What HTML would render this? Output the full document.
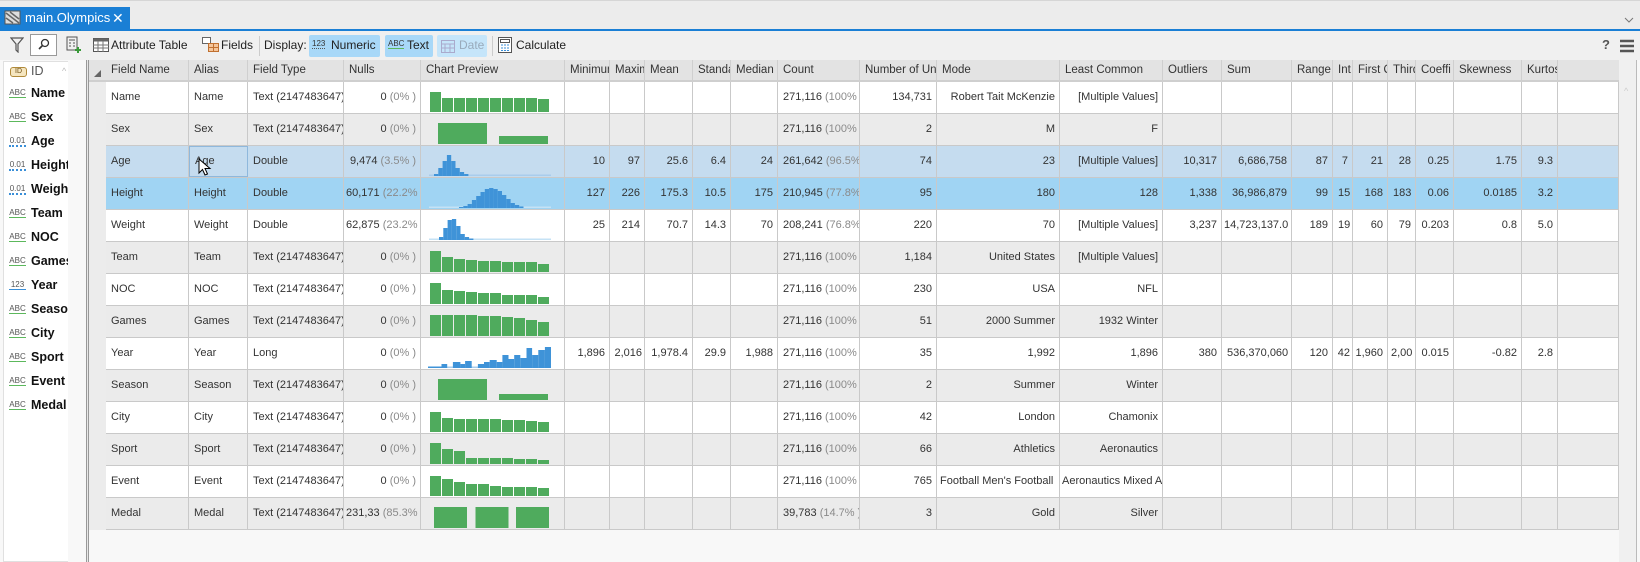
<!DOCTYPE html>
<html><head><meta charset="utf-8"><style>
*{box-sizing:border-box;margin:0;padding:0}
body{width:1640px;height:562px;overflow:hidden;background:#f8f8f8;font-family:"Liberation Sans",sans-serif;font-size:12px;color:#333;position:relative}
.abs{position:absolute}
#tabbar{left:0;top:0;width:1640px;height:29px;background:#ececec;border-top:1px solid #d6d6d6}
#tab{left:0;top:7px;width:130px;height:22px;background:#1a7fd5;color:#fff;font-size:13px;line-height:22px}
#blue{left:0;top:29px;width:1640px;height:2px;background:#1a7fd5}
#tb{left:0;top:31px;width:1640px;height:29px;background:#f0f0f0}
.tbt{position:absolute;top:37px;font-size:12px;line-height:16px;color:#222}
.btn{position:absolute;top:35px;height:22px;background:#a8d8f8;border-radius:2px}
#left{left:0;top:60px;width:86px;height:502px;background:#f1f1f1}
#list{left:3px;top:61px;width:65px;height:501px;background:#fff;border:1px solid #e0e0e0;border-right:none}
.fi{position:absolute;left:31px;font-weight:bold;font-size:12.5px;color:#111;white-space:nowrap;width:37px;overflow:hidden;line-height:16px}
.ic{position:absolute;left:9px;font-size:8px;color:#555;line-height:9px;width:17px;text-align:center}
.ic.t{border-bottom:1.5px solid #5cb85c}
.ic.d{border-bottom:2px dotted #3a8fd8}
.ic.l{border-bottom:1.5px solid #3a8fd8}
#hdr{left:89px;top:60px;width:1530px;height:22px;background:#e3e3e3;border-bottom:2px solid #cfcfcf}
.hc{position:absolute;top:0;height:20px;line-height:20px;padding-left:5px;white-space:nowrap;overflow:hidden;color:#333;border-right:1px solid #cfcfcf;font-size:11.5px}
.row{position:absolute;left:106px;width:1513px;height:32px;border-bottom:1px solid #c9c9c9}
.c{position:absolute;top:0;height:31px;line-height:31px;border-right:1px solid #c9c9c9;white-space:nowrap;overflow:hidden;padding:0 4px 0 5px;color:#333;font-size:11px}
.r{text-align:right}
.g{color:#8a8a8a}
svg{position:absolute;left:0;top:0}
</style></head><body>
<div id="tabbar" class="abs"></div>
<div id="tab" class="abs"><svg width="18" height="16" style="left:4px;top:3px"><rect x="1" y="1" width="15" height="13" fill="#ddd" stroke="#555"/><path d="M2 3L15 13M2 8L9 13M6 2L15 9" stroke="#666" stroke-width="1.5"/></svg><span style="position:absolute;left:25px">main.Olympics</span><span style="position:absolute;left:112px;font-size:14px">✕</span></div>
<div id="blue" class="abs"></div>
<div id="tb" class="abs"></div>
<svg width="14" height="16" style="left:10px;top:37px"><path d="M1 1H13L8 7V15L6 13V7Z" fill="none" stroke="#555" stroke-width="1.2"/></svg>
<div class="abs" style="left:30px;top:34px;width:27px;height:22px;background:#fff;border:1px solid #999"><svg width="25" height="20"><circle cx="14" cy="8" r="3.5" fill="none" stroke="#333" stroke-width="1.3"/><path d="M11.5 10.5L8 14" stroke="#333" stroke-width="1.6"/></svg></div>
<svg width="16" height="18" style="left:66px;top:36px"><rect x="1" y="1" width="10" height="13" fill="none" stroke="#555"/><path d="M3 4h6M3 7h2M7 7h2M3 10h2M7 10h2" stroke="#555"/><path d="M12 11v6M9 14h6" stroke="#3a9a3a" stroke-width="2"/></svg>
<div class="abs" style="left:86px;top:60px;width:3px;height:502px;border-left:1px solid #999;border-right:1px solid #999;background:#e8e8e8"></div>
<svg width="16" height="14" style="left:93px;top:38px"><rect x="0.5" y="0.5" width="15" height="13" fill="#fff" stroke="#555"/><rect x="0.5" y="0.5" width="15" height="3" fill="#666"/><path d="M0 7h16M0 10h16M5 3v11M10 3v11" stroke="#777"/></svg>
<div class="tbt" style="left:111px">Attribute Table</div>
<svg width="18" height="16" style="left:202px;top:37px"><rect x="0.5" y="0.5" width="8" height="6" fill="#fff" stroke="#666"/><rect x="6.5" y="6.5" width="10" height="8" fill="#f5c59a" stroke="#c07030"/><path d="M11.5 6.5v8M6.5 10.5h10" stroke="#c07030"/></svg>
<div class="tbt" style="left:221px">Fields</div>
<div class="abs" style="left:259px;top:36px;width:1px;height:20px;background:#ccc"></div>
<div class="tbt" style="left:264px">Display:</div>
<div class="btn" style="left:309px;width:71px"></div>
<div class="abs" style="left:312px;top:39px;font-size:8px;color:#333;border-bottom:1px dotted #555;line-height:9px">123</div>
<div class="tbt" style="left:331px">Numeric</div>
<div class="btn" style="left:385px;width:48px"></div>
<div class="abs" style="left:388px;top:39px;font-size:8px;color:#333;border-bottom:1.5px solid #5cb85c;line-height:9px">ABC</div>
<div class="tbt" style="left:407px">Text</div>
<div class="btn" style="left:437px;width:50px;background:#c5e5fa"></div>
<svg width="14" height="14" style="left:441px;top:39px"><rect x="0.5" y="1.5" width="13" height="12" fill="none" stroke="#aac"/><path d="M0 5h14M4 5v9M9 5v9M0 9h14" stroke="#aac"/></svg>
<div class="tbt" style="left:459px;color:#9ab">Date</div>
<div class="abs" style="left:492px;top:36px;width:1px;height:20px;background:#ccc"></div>
<svg width="14" height="16" style="left:498px;top:37px"><rect x="0.5" y="0.5" width="13" height="15" fill="#fff" stroke="#555"/><rect x="2.5" y="2.5" width="9" height="3" fill="none" stroke="#555"/><path d="M3 8h2M6 8h2M9 8h2M3 11h2M6 11h2M9 11h2M3 13.5h2M6 13.5h2M9 13.5h2" stroke="#3a8fd8"/></svg>
<div class="tbt" style="left:516px">Calculate</div>
<div class="tbt" style="left:1602px;font-weight:bold;color:#555;font-size:13px">?</div>
<svg width="14" height="14" style="left:1620px;top:39px"><path d="M0 2h14M0 7h14M0 12h14" stroke="#555" stroke-width="2.5"/></svg>
<svg width="10" height="6" style="left:1624px;top:17px"><path d="M1 1l4 4 4-4" fill="none" stroke="#777"/></svg>
<div id="list" class="abs"></div>
<div class="abs" style="left:62px;top:66px;color:#bbb;font-size:9px">^</div>
<div class="abs" style="left:10px;top:67px;width:17px;height:10px;border:1px solid #b08a3a;border-radius:3px;background:#f5e6c0;font-size:7px;line-height:8px;text-align:center;color:#6a4a10">ID</div>
<div class="abs" style="left:31px;top:64px;font-size:12.5px;color:#555">ID</div>
<div class="ic t" style="top:88px">ABC</div><div class="fi" style="top:85px">Name</div>
<div class="ic t" style="top:112px">ABC</div><div class="fi" style="top:109px">Sex</div>
<div class="ic d" style="top:136px">0.01</div><div class="fi" style="top:133px">Age</div>
<div class="ic d" style="top:160px">0.01</div><div class="fi" style="top:157px">Height</div>
<div class="ic d" style="top:184px">0.01</div><div class="fi" style="top:181px">Weight</div>
<div class="ic t" style="top:208px">ABC</div><div class="fi" style="top:205px">Team</div>
<div class="ic t" style="top:232px">ABC</div><div class="fi" style="top:229px">NOC</div>
<div class="ic t" style="top:256px">ABC</div><div class="fi" style="top:253px">Games</div>
<div class="ic l" style="top:280px">123</div><div class="fi" style="top:277px">Year</div>
<div class="ic t" style="top:304px">ABC</div><div class="fi" style="top:301px">Season</div>
<div class="ic t" style="top:328px">ABC</div><div class="fi" style="top:325px">City</div>
<div class="ic t" style="top:352px">ABC</div><div class="fi" style="top:349px">Sport</div>
<div class="ic t" style="top:376px">ABC</div><div class="fi" style="top:373px">Event</div>
<div class="ic t" style="top:400px">ABC</div><div class="fi" style="top:397px">Medal</div>
<div class="abs" style="left:89px;top:82px;width:17px;height:448px;background:#ececec"></div>
<div class="abs" style="left:1619px;top:60px;width:18px;height:502px;background:#f0f0f0;border-right:1px solid #bbb"></div>
<div class="abs" style="left:1624px;top:86px;color:#ccc;font-size:9px">^</div>
<div id="hdr" class="abs">
<svg width="8" height="8" style="left:5px;top:10px"><path d="M7 0V7H0Z" fill="#666"/></svg>
<div class="hc" style="left:17px;width:83px">Field Name</div>
<div class="hc" style="left:100px;width:59px">Alias</div>
<div class="hc" style="left:159px;width:96px">Field Type</div>
<div class="hc" style="left:255px;width:77px">Nulls</div>
<div class="hc" style="left:332px;width:144px">Chart Preview</div>
<div class="hc" style="left:476px;width:45px">Minimum</div>
<div class="hc" style="left:521px;width:35px">Maximum</div>
<div class="hc" style="left:556px;width:48px">Mean</div>
<div class="hc" style="left:604px;width:38px">Standard</div>
<div class="hc" style="left:642px;width:47px">Median</div>
<div class="hc" style="left:689px;width:82px">Count</div>
<div class="hc" style="left:771px;width:77px">Number of Unique</div>
<div class="hc" style="left:848px;width:123px">Mode</div>
<div class="hc" style="left:971px;width:103px">Least Common</div>
<div class="hc" style="left:1074px;width:59px">Outliers</div>
<div class="hc" style="left:1133px;width:70px">Sum</div>
<div class="hc" style="left:1203px;width:41px">Range</div>
<div class="hc" style="left:1244px;width:20px">Int</div>
<div class="hc" style="left:1264px;width:35px">First Q</div>
<div class="hc" style="left:1299px;width:28px">Third</div>
<div class="hc" style="left:1327px;width:38px">Coeffi</div>
<div class="hc" style="left:1365px;width:68px">Skewness</div>
<div class="hc" style="left:1433px;width:36px">Kurtosis</div>
</div>

<div class="row" style="top:82px;background:#fff">
<div class="c" style="left:0;width:83px">Name</div><div class="c" style="left:83px;width:59px">Name</div><div class="c" style="left:142px;width:96px">Text (2147483647)</div><div class="c r" style="left:238px;width:77px">0 <span class="g">(0% )</span></div>
<div class="c" style="left:315px;width:144px"><svg width="144" height="31" fill="#4fab5d"><rect x="9" y="10" width="11" height="20"/><rect x="21" y="16" width="11" height="14"/><rect x="33" y="16" width="11" height="14"/><rect x="45" y="16" width="11" height="14"/><rect x="57" y="16" width="11" height="14"/><rect x="69" y="16" width="11" height="14"/><rect x="81" y="16" width="11" height="14"/><rect x="93" y="16" width="11" height="14"/><rect x="105" y="16" width="11" height="14"/><rect x="117" y="17" width="11" height="13"/></svg></div>
<div class="c" style="left:459px;width:45px"></div><div class="c" style="left:504px;width:35px"></div><div class="c" style="left:539px;width:48px"></div><div class="c" style="left:587px;width:38px"></div><div class="c" style="left:625px;width:47px"></div>
<div class="c r" style="left:672px;width:82px">271,116 <span class="g">(100% )</span></div><div class="c r" style="left:754px;width:77px">134,731</div><div class="c r" style="left:831px;width:123px">Robert Tait McKenzie</div><div class="c r" style="left:954px;width:103px">[Multiple Values]</div>
<div class="c" style="left:1057px;width:59px"></div><div class="c" style="left:1116px;width:70px"></div><div class="c" style="left:1186px;width:41px"></div><div class="c" style="left:1227px;width:20px"></div><div class="c" style="left:1247px;width:35px"></div><div class="c" style="left:1282px;width:28px"></div><div class="c" style="left:1310px;width:38px"></div><div class="c" style="left:1348px;width:68px"></div><div class="c" style="left:1416px;width:36px"></div><div class="c" style="left:1452px;width:61px"></div>
</div>

<div class="row" style="top:114px;background:#ebebeb">
<div class="c" style="left:0;width:83px">Sex</div><div class="c" style="left:83px;width:59px">Sex</div><div class="c" style="left:142px;width:96px">Text (2147483647)</div><div class="c r" style="left:238px;width:77px">0 <span class="g">(0% )</span></div>
<div class="c" style="left:315px;width:144px"><svg width="144" height="31" fill="#4fab5d"><rect x="17" y="9" width="49" height="21"/><rect x="78" y="22" width="49" height="8"/></svg></div>
<div class="c" style="left:459px;width:45px"></div><div class="c" style="left:504px;width:35px"></div><div class="c" style="left:539px;width:48px"></div><div class="c" style="left:587px;width:38px"></div><div class="c" style="left:625px;width:47px"></div>
<div class="c r" style="left:672px;width:82px">271,116 <span class="g">(100% )</span></div><div class="c r" style="left:754px;width:77px">2</div><div class="c r" style="left:831px;width:123px">M</div><div class="c r" style="left:954px;width:103px">F</div>
<div class="c" style="left:1057px;width:59px"></div><div class="c" style="left:1116px;width:70px"></div><div class="c" style="left:1186px;width:41px"></div><div class="c" style="left:1227px;width:20px"></div><div class="c" style="left:1247px;width:35px"></div><div class="c" style="left:1282px;width:28px"></div><div class="c" style="left:1310px;width:38px"></div><div class="c" style="left:1348px;width:68px"></div><div class="c" style="left:1416px;width:36px"></div><div class="c" style="left:1452px;width:61px"></div>
</div>

<div class="row" style="top:146px;background:#c5dcef">
<div class="c" style="left:0;width:83px">Age</div><div class="c" style="left:83px;width:59px;border:1px solid #8fb8dc;line-height:29px">Age</div><div class="c" style="left:142px;width:96px">Double</div><div class="c r" style="left:238px;width:77px">9,474 <span class="g">(3.5% )</span></div>
<div class="c" style="left:315px;width:144px"><svg width="144" height="31"><rect x="8" y="28.5" width="122" height="1.5" fill="#a9cdec"/><g fill="#3f93d8"><rect x="13" y="28" width="4.3" height="2"/><rect x="17.3" y="22" width="4.3" height="8"/><rect x="21.6" y="15" width="4.3" height="15"/><rect x="25.9" y="9" width="4.3" height="21"/><rect x="30.2" y="15" width="4.3" height="15"/><rect x="34.5" y="22" width="4.3" height="8"/><rect x="38.8" y="26" width="4.3" height="4"/><rect x="43.1" y="28" width="4.3" height="2"/></g></svg></div>
<div class="c r" style="left:459px;width:45px">10</div><div class="c r" style="left:504px;width:35px">97</div><div class="c r" style="left:539px;width:48px">25.6</div><div class="c r" style="left:587px;width:38px">6.4</div><div class="c r" style="left:625px;width:47px">24</div>
<div class="c r" style="left:672px;width:82px">261,642 <span class="g">(96.5% )</span></div><div class="c r" style="left:754px;width:77px">74</div><div class="c r" style="left:831px;width:123px">23</div><div class="c r" style="left:954px;width:103px">[Multiple Values]</div>
<div class="c r" style="left:1057px;width:59px">10,317</div><div class="c r" style="left:1116px;width:70px">6,686,758</div><div class="c r" style="left:1186px;width:41px">87</div><div class="c r" style="left:1227px;width:20px">7</div><div class="c r" style="left:1247px;width:35px">21</div><div class="c r" style="left:1282px;width:28px">28</div><div class="c r" style="left:1310px;width:38px">0.25</div><div class="c r" style="left:1348px;width:68px">1.75</div><div class="c r" style="left:1416px;width:36px">9.3</div><div class="c" style="left:1452px;width:61px"></div>
</div>
<svg width="14" height="20" style="left:198px;top:158px"><path d="M1 1V15L4.5 11.5L7 17L9.5 16L7 10.5H12Z" fill="#fff" stroke="#000" stroke-width="1"/></svg>

<div class="row" style="top:178px;background:#a0d4f3">
<div class="c" style="left:0;width:83px">Height</div><div class="c" style="left:83px;width:59px">Height</div><div class="c" style="left:142px;width:96px">Double</div><div class="c r" style="left:238px;width:77px;padding-left:2px">60,171 <span class="g">(22.2% )</span></div>
<div class="c" style="left:315px;width:144px"><svg width="144" height="31"><rect x="8" y="28.5" width="122" height="1.5" fill="#c5e2f5"/><g fill="#3f93d8"><rect x="38" y="29" width="4.3" height="1"/><rect x="42.3" y="28" width="4.3" height="2"/><rect x="46.6" y="26" width="4.3" height="4"/><rect x="50.9" y="22" width="4.3" height="8"/><rect x="55.2" y="18" width="4.3" height="12"/><rect x="59.5" y="14" width="4.3" height="16"/><rect x="63.8" y="11" width="4.3" height="19"/><rect x="68.1" y="10" width="4.3" height="20"/><rect x="72.4" y="11" width="4.3" height="19"/><rect x="76.7" y="13" width="4.3" height="17"/><rect x="81" y="17" width="4.3" height="13"/><rect x="85.3" y="21" width="4.3" height="9"/><rect x="89.6" y="25" width="4.3" height="5"/><rect x="93.9" y="27" width="4.3" height="3"/><rect x="98.2" y="28.5" width="4.3" height="1.5"/></g></svg></div>
<div class="c r" style="left:459px;width:45px">127</div><div class="c r" style="left:504px;width:35px">226</div><div class="c r" style="left:539px;width:48px">175.3</div><div class="c r" style="left:587px;width:38px">10.5</div><div class="c r" style="left:625px;width:47px">175</div>
<div class="c r" style="left:672px;width:82px">210,945 <span class="g">(77.8% )</span></div><div class="c r" style="left:754px;width:77px">95</div><div class="c r" style="left:831px;width:123px">180</div><div class="c r" style="left:954px;width:103px">128</div>
<div class="c r" style="left:1057px;width:59px">1,338</div><div class="c r" style="left:1116px;width:70px">36,986,879</div><div class="c r" style="left:1186px;width:41px">99</div><div class="c r" style="left:1227px;width:20px">15</div><div class="c r" style="left:1247px;width:35px">168</div><div class="c r" style="left:1282px;width:28px">183</div><div class="c r" style="left:1310px;width:38px">0.06</div><div class="c r" style="left:1348px;width:68px">0.0185</div><div class="c r" style="left:1416px;width:36px">3.2</div><div class="c" style="left:1452px;width:61px"></div>
</div>

<div class="row" style="top:210px;background:#fff">
<div class="c" style="left:0;width:83px">Weight</div><div class="c" style="left:83px;width:59px">Weight</div><div class="c" style="left:142px;width:96px">Double</div><div class="c r" style="left:238px;width:77px;padding-left:2px">62,875 <span class="g">(23.2% )</span></div>
<div class="c" style="left:315px;width:144px"><svg width="144" height="31"><rect x="8" y="28.5" width="122" height="1.5" fill="#c5e2f5"/><g fill="#3f93d8"><rect x="18" y="27" width="4.3" height="3"/><rect x="22.3" y="18" width="4.3" height="12"/><rect x="26.6" y="10" width="4.3" height="20"/><rect x="30.9" y="9" width="4.3" height="21"/><rect x="35.2" y="16" width="4.3" height="14"/><rect x="39.5" y="24" width="4.3" height="6"/><rect x="43.8" y="27" width="4.3" height="3"/><rect x="48.1" y="28.5" width="4.3" height="1.5"/></g></svg></div>
<div class="c r" style="left:459px;width:45px">25</div><div class="c r" style="left:504px;width:35px">214</div><div class="c r" style="left:539px;width:48px">70.7</div><div class="c r" style="left:587px;width:38px">14.3</div><div class="c r" style="left:625px;width:47px">70</div>
<div class="c r" style="left:672px;width:82px">208,241 <span class="g">(76.8% )</span></div><div class="c r" style="left:754px;width:77px">220</div><div class="c r" style="left:831px;width:123px">70</div><div class="c r" style="left:954px;width:103px">[Multiple Values]</div>
<div class="c r" style="left:1057px;width:59px">3,237</div><div class="c r" style="left:1116px;width:70px;padding-left:2px">14,723,137.0</div><div class="c r" style="left:1186px;width:41px">189</div><div class="c r" style="left:1227px;width:20px">19</div><div class="c r" style="left:1247px;width:35px">60</div><div class="c r" style="left:1282px;width:28px">79</div><div class="c r" style="left:1310px;width:38px">0.203</div><div class="c r" style="left:1348px;width:68px">0.8</div><div class="c r" style="left:1416px;width:36px">5.0</div><div class="c" style="left:1452px;width:61px"></div>
</div>

<div class="row" style="top:242px;background:#ebebeb">
<div class="c" style="left:0;width:83px">Team</div><div class="c" style="left:83px;width:59px">Team</div><div class="c" style="left:142px;width:96px">Text (2147483647)</div><div class="c r" style="left:238px;width:77px">0 <span class="g">(0% )</span></div>
<div class="c" style="left:315px;width:144px"><svg width="144" height="31" fill="#4fab5d"><rect x="9" y="9" width="11" height="21"/><rect x="21" y="15" width="11" height="15"/><rect x="33" y="17" width="11" height="13"/><rect x="45" y="18" width="11" height="12"/><rect x="57" y="19" width="11" height="11"/><rect x="69" y="19" width="11" height="11"/><rect x="81" y="20" width="11" height="10"/><rect x="93" y="20" width="11" height="10"/><rect x="105" y="20" width="11" height="10"/><rect x="117" y="22" width="11" height="8"/></svg></div>
<div class="c" style="left:459px;width:45px"></div><div class="c" style="left:504px;width:35px"></div><div class="c" style="left:539px;width:48px"></div><div class="c" style="left:587px;width:38px"></div><div class="c" style="left:625px;width:47px"></div>
<div class="c r" style="left:672px;width:82px">271,116 <span class="g">(100% )</span></div><div class="c r" style="left:754px;width:77px">1,184</div><div class="c r" style="left:831px;width:123px">United States</div><div class="c r" style="left:954px;width:103px">[Multiple Values]</div>
<div class="c" style="left:1057px;width:59px"></div><div class="c" style="left:1116px;width:70px"></div><div class="c" style="left:1186px;width:41px"></div><div class="c" style="left:1227px;width:20px"></div><div class="c" style="left:1247px;width:35px"></div><div class="c" style="left:1282px;width:28px"></div><div class="c" style="left:1310px;width:38px"></div><div class="c" style="left:1348px;width:68px"></div><div class="c" style="left:1416px;width:36px"></div><div class="c" style="left:1452px;width:61px"></div>
</div>

<div class="row" style="top:274px;background:#fff">
<div class="c" style="left:0;width:83px">NOC</div><div class="c" style="left:83px;width:59px">NOC</div><div class="c" style="left:142px;width:96px">Text (2147483647)</div><div class="c r" style="left:238px;width:77px">0 <span class="g">(0% )</span></div>
<div class="c" style="left:315px;width:144px"><svg width="144" height="31" fill="#4fab5d"><rect x="9" y="9" width="11" height="21"/><rect x="21" y="16" width="11" height="14"/><rect x="33" y="17" width="11" height="13"/><rect x="45" y="18" width="11" height="12"/><rect x="57" y="19" width="11" height="11"/><rect x="69" y="19" width="11" height="11"/><rect x="81" y="21" width="11" height="9"/><rect x="93" y="21" width="11" height="9"/><rect x="105" y="21" width="11" height="9"/><rect x="117" y="23" width="11" height="7"/></svg></div>
<div class="c" style="left:459px;width:45px"></div><div class="c" style="left:504px;width:35px"></div><div class="c" style="left:539px;width:48px"></div><div class="c" style="left:587px;width:38px"></div><div class="c" style="left:625px;width:47px"></div>
<div class="c r" style="left:672px;width:82px">271,116 <span class="g">(100% )</span></div><div class="c r" style="left:754px;width:77px">230</div><div class="c r" style="left:831px;width:123px">USA</div><div class="c r" style="left:954px;width:103px">NFL</div>
<div class="c" style="left:1057px;width:59px"></div><div class="c" style="left:1116px;width:70px"></div><div class="c" style="left:1186px;width:41px"></div><div class="c" style="left:1227px;width:20px"></div><div class="c" style="left:1247px;width:35px"></div><div class="c" style="left:1282px;width:28px"></div><div class="c" style="left:1310px;width:38px"></div><div class="c" style="left:1348px;width:68px"></div><div class="c" style="left:1416px;width:36px"></div><div class="c" style="left:1452px;width:61px"></div>
</div>

<div class="row" style="top:306px;background:#ebebeb">
<div class="c" style="left:0;width:83px">Games</div><div class="c" style="left:83px;width:59px">Games</div><div class="c" style="left:142px;width:96px">Text (2147483647)</div><div class="c r" style="left:238px;width:77px">0 <span class="g">(0% )</span></div>
<div class="c" style="left:315px;width:144px"><svg width="144" height="31" fill="#4fab5d"><rect x="9" y="9" width="11" height="21"/><rect x="21" y="9" width="11" height="21"/><rect x="33" y="9" width="11" height="21"/><rect x="45" y="9" width="11" height="21"/><rect x="57" y="10" width="11" height="20"/><rect x="69" y="10" width="11" height="20"/><rect x="81" y="11" width="11" height="19"/><rect x="93" y="12" width="11" height="18"/><rect x="105" y="14" width="11" height="16"/><rect x="117" y="16" width="11" height="14"/></svg></div>
<div class="c" style="left:459px;width:45px"></div><div class="c" style="left:504px;width:35px"></div><div class="c" style="left:539px;width:48px"></div><div class="c" style="left:587px;width:38px"></div><div class="c" style="left:625px;width:47px"></div>
<div class="c r" style="left:672px;width:82px">271,116 <span class="g">(100% )</span></div><div class="c r" style="left:754px;width:77px">51</div><div class="c r" style="left:831px;width:123px">2000 Summer</div><div class="c r" style="left:954px;width:103px">1932 Winter</div>
<div class="c" style="left:1057px;width:59px"></div><div class="c" style="left:1116px;width:70px"></div><div class="c" style="left:1186px;width:41px"></div><div class="c" style="left:1227px;width:20px"></div><div class="c" style="left:1247px;width:35px"></div><div class="c" style="left:1282px;width:28px"></div><div class="c" style="left:1310px;width:38px"></div><div class="c" style="left:1348px;width:68px"></div><div class="c" style="left:1416px;width:36px"></div><div class="c" style="left:1452px;width:61px"></div>
</div>

<div class="row" style="top:338px;background:#fff">
<div class="c" style="left:0;width:83px">Year</div><div class="c" style="left:83px;width:59px">Year</div><div class="c" style="left:142px;width:96px">Long</div><div class="c r" style="left:238px;width:77px">0 <span class="g">(0% )</span></div>
<div class="c" style="left:315px;width:144px"><svg width="144" height="31"><rect x="7" y="28.5" width="123" height="1.5" fill="#a9cdec"/><g fill="#3f93d8"><rect x="7" y="28.5" width="13.5" height="1.5"/><rect x="20.5" y="26" width="5.7" height="4"/><rect x="31.9" y="24" width="7.5" height="6"/><rect x="39.4" y="26" width="4.7" height="4"/><rect x="44.1" y="23" width="6.6" height="7"/><rect x="56.9" y="26" width="6.1" height="4"/><rect x="63" y="24" width="5.7" height="6"/><rect x="68.7" y="22" width="7" height="8"/><rect x="75.7" y="24" width="5.7" height="6"/><rect x="81.4" y="17" width="6.1" height="13"/><rect x="87.5" y="21" width="5.7" height="9"/><rect x="93.2" y="17" width="6.1" height="13"/><rect x="99.3" y="20" width="6.2" height="10"/><rect x="105.5" y="10" width="5.6" height="20"/><rect x="111.1" y="17" width="6.2" height="13"/><rect x="117.3" y="12" width="6.6" height="18"/><rect x="123.9" y="9" width="6.1" height="21"/></g></svg></div>
<div class="c r" style="left:459px;width:45px">1,896</div><div class="c r" style="left:504px;width:35px;padding-left:1px;padding-right:2px">2,016</div><div class="c r" style="left:539px;width:48px">1,978.4</div><div class="c r" style="left:587px;width:38px">29.9</div><div class="c r" style="left:625px;width:47px">1,988</div>
<div class="c r" style="left:672px;width:82px">271,116 <span class="g">(100% )</span></div><div class="c r" style="left:754px;width:77px">35</div><div class="c r" style="left:831px;width:123px">1,992</div><div class="c r" style="left:954px;width:103px">1,896</div>
<div class="c r" style="left:1057px;width:59px">380</div><div class="c r" style="left:1116px;width:70px">536,370,060</div><div class="c r" style="left:1186px;width:41px">120</div><div class="c r" style="left:1227px;width:20px;padding:0 2px">42</div><div class="c r" style="left:1247px;width:35px;padding-left:1px">1,960</div><div class="c" style="left:1282px;width:28px;padding-left:3px">2,00</div><div class="c r" style="left:1310px;width:38px">0.015</div><div class="c r" style="left:1348px;width:68px">-0.82</div><div class="c r" style="left:1416px;width:36px">2.8</div><div class="c" style="left:1452px;width:61px"></div>
</div>

<div class="row" style="top:370px;background:#ebebeb">
<div class="c" style="left:0;width:83px">Season</div><div class="c" style="left:83px;width:59px">Season</div><div class="c" style="left:142px;width:96px">Text (2147483647)</div><div class="c r" style="left:238px;width:77px">0 <span class="g">(0% )</span></div>
<div class="c" style="left:315px;width:144px"><svg width="144" height="31" fill="#4fab5d"><rect x="17" y="9" width="49" height="21"/><rect x="78" y="24" width="49" height="6"/></svg></div>
<div class="c" style="left:459px;width:45px"></div><div class="c" style="left:504px;width:35px"></div><div class="c" style="left:539px;width:48px"></div><div class="c" style="left:587px;width:38px"></div><div class="c" style="left:625px;width:47px"></div>
<div class="c r" style="left:672px;width:82px">271,116 <span class="g">(100% )</span></div><div class="c r" style="left:754px;width:77px">2</div><div class="c r" style="left:831px;width:123px">Summer</div><div class="c r" style="left:954px;width:103px">Winter</div>
<div class="c" style="left:1057px;width:59px"></div><div class="c" style="left:1116px;width:70px"></div><div class="c" style="left:1186px;width:41px"></div><div class="c" style="left:1227px;width:20px"></div><div class="c" style="left:1247px;width:35px"></div><div class="c" style="left:1282px;width:28px"></div><div class="c" style="left:1310px;width:38px"></div><div class="c" style="left:1348px;width:68px"></div><div class="c" style="left:1416px;width:36px"></div><div class="c" style="left:1452px;width:61px"></div>
</div>

<div class="row" style="top:402px;background:#fff">
<div class="c" style="left:0;width:83px">City</div><div class="c" style="left:83px;width:59px">City</div><div class="c" style="left:142px;width:96px">Text (2147483647)</div><div class="c r" style="left:238px;width:77px">0 <span class="g">(0% )</span></div>
<div class="c" style="left:315px;width:144px"><svg width="144" height="31" fill="#4fab5d"><rect x="9" y="10" width="11" height="20"/><rect x="21" y="16" width="11" height="14"/><rect x="33" y="17" width="11" height="13"/><rect x="45" y="17" width="11" height="13"/><rect x="57" y="17" width="11" height="13"/><rect x="69" y="17" width="11" height="13"/><rect x="81" y="18" width="11" height="12"/><rect x="93" y="18" width="11" height="12"/><rect x="105" y="19" width="11" height="11"/><rect x="117" y="20" width="11" height="10"/></svg></div>
<div class="c" style="left:459px;width:45px"></div><div class="c" style="left:504px;width:35px"></div><div class="c" style="left:539px;width:48px"></div><div class="c" style="left:587px;width:38px"></div><div class="c" style="left:625px;width:47px"></div>
<div class="c r" style="left:672px;width:82px">271,116 <span class="g">(100% )</span></div><div class="c r" style="left:754px;width:77px">42</div><div class="c r" style="left:831px;width:123px">London</div><div class="c r" style="left:954px;width:103px">Chamonix</div>
<div class="c" style="left:1057px;width:59px"></div><div class="c" style="left:1116px;width:70px"></div><div class="c" style="left:1186px;width:41px"></div><div class="c" style="left:1227px;width:20px"></div><div class="c" style="left:1247px;width:35px"></div><div class="c" style="left:1282px;width:28px"></div><div class="c" style="left:1310px;width:38px"></div><div class="c" style="left:1348px;width:68px"></div><div class="c" style="left:1416px;width:36px"></div><div class="c" style="left:1452px;width:61px"></div>
</div>

<div class="row" style="top:434px;background:#ebebeb">
<div class="c" style="left:0;width:83px">Sport</div><div class="c" style="left:83px;width:59px">Sport</div><div class="c" style="left:142px;width:96px">Text (2147483647)</div><div class="c r" style="left:238px;width:77px">0 <span class="g">(0% )</span></div>
<div class="c" style="left:315px;width:144px"><svg width="144" height="31" fill="#4fab5d"><rect x="9" y="9" width="11" height="21"/><rect x="21" y="15" width="11" height="15"/><rect x="33" y="17" width="11" height="13"/><rect x="45" y="24" width="11" height="6"/><rect x="57" y="24" width="11" height="6"/><rect x="69" y="24" width="11" height="6"/><rect x="81" y="24" width="11" height="6"/><rect x="93" y="25" width="11" height="5"/><rect x="105" y="25" width="11" height="5"/><rect x="117" y="26" width="11" height="4"/></svg></div>
<div class="c" style="left:459px;width:45px"></div><div class="c" style="left:504px;width:35px"></div><div class="c" style="left:539px;width:48px"></div><div class="c" style="left:587px;width:38px"></div><div class="c" style="left:625px;width:47px"></div>
<div class="c r" style="left:672px;width:82px">271,116 <span class="g">(100% )</span></div><div class="c r" style="left:754px;width:77px">66</div><div class="c r" style="left:831px;width:123px">Athletics</div><div class="c r" style="left:954px;width:103px">Aeronautics</div>
<div class="c" style="left:1057px;width:59px"></div><div class="c" style="left:1116px;width:70px"></div><div class="c" style="left:1186px;width:41px"></div><div class="c" style="left:1227px;width:20px"></div><div class="c" style="left:1247px;width:35px"></div><div class="c" style="left:1282px;width:28px"></div><div class="c" style="left:1310px;width:38px"></div><div class="c" style="left:1348px;width:68px"></div><div class="c" style="left:1416px;width:36px"></div><div class="c" style="left:1452px;width:61px"></div>
</div>

<div class="row" style="top:466px;background:#fff">
<div class="c" style="left:0;width:83px">Event</div><div class="c" style="left:83px;width:59px">Event</div><div class="c" style="left:142px;width:96px">Text (2147483647)</div><div class="c r" style="left:238px;width:77px">0 <span class="g">(0% )</span></div>
<div class="c" style="left:315px;width:144px"><svg width="144" height="31" fill="#4fab5d"><rect x="9" y="10" width="11" height="20"/><rect x="21" y="13" width="11" height="17"/><rect x="33" y="16" width="11" height="14"/><rect x="45" y="18" width="11" height="12"/><rect x="57" y="18" width="11" height="12"/><rect x="69" y="20" width="11" height="10"/><rect x="81" y="21" width="11" height="9"/><rect x="93" y="21" width="11" height="9"/><rect x="105" y="21" width="11" height="9"/><rect x="117" y="22" width="11" height="8"/></svg></div>
<div class="c" style="left:459px;width:45px"></div><div class="c" style="left:504px;width:35px"></div><div class="c" style="left:539px;width:48px"></div><div class="c" style="left:587px;width:38px"></div><div class="c" style="left:625px;width:47px"></div>
<div class="c r" style="left:672px;width:82px">271,116 <span class="g">(100% )</span></div><div class="c r" style="left:754px;width:77px">765</div><div class="c" style="left:831px;width:123px;padding-left:3px">Football Men's Football</div><div class="c" style="left:954px;width:103px;padding-left:2px">Aeronautics Mixed Aeronautics</div>
<div class="c" style="left:1057px;width:59px"></div><div class="c" style="left:1116px;width:70px"></div><div class="c" style="left:1186px;width:41px"></div><div class="c" style="left:1227px;width:20px"></div><div class="c" style="left:1247px;width:35px"></div><div class="c" style="left:1282px;width:28px"></div><div class="c" style="left:1310px;width:38px"></div><div class="c" style="left:1348px;width:68px"></div><div class="c" style="left:1416px;width:36px"></div><div class="c" style="left:1452px;width:61px"></div>
</div>

<div class="row" style="top:498px;background:#ebebeb">
<div class="c" style="left:0;width:83px">Medal</div><div class="c" style="left:83px;width:59px">Medal</div><div class="c" style="left:142px;width:96px">Text (2147483647)</div><div class="c r" style="left:238px;width:77px;padding-left:2px">231,33 <span class="g">(85.3% )</span></div>
<div class="c" style="left:315px;width:144px"><svg width="144" height="31" fill="#4fab5d"><rect x="13" y="9" width="33" height="21"/><rect x="54.5" y="9" width="33" height="21"/><rect x="95" y="9" width="33" height="21"/></svg></div>
<div class="c" style="left:459px;width:45px"></div><div class="c" style="left:504px;width:35px"></div><div class="c" style="left:539px;width:48px"></div><div class="c" style="left:587px;width:38px"></div><div class="c" style="left:625px;width:47px"></div>
<div class="c r" style="left:672px;width:82px">39,783 <span class="g">(14.7% )</span></div><div class="c r" style="left:754px;width:77px">3</div><div class="c r" style="left:831px;width:123px">Gold</div><div class="c r" style="left:954px;width:103px">Silver</div>
<div class="c" style="left:1057px;width:59px"></div><div class="c" style="left:1116px;width:70px"></div><div class="c" style="left:1186px;width:41px"></div><div class="c" style="left:1227px;width:20px"></div><div class="c" style="left:1247px;width:35px"></div><div class="c" style="left:1282px;width:28px"></div><div class="c" style="left:1310px;width:38px"></div><div class="c" style="left:1348px;width:68px"></div><div class="c" style="left:1416px;width:36px"></div><div class="c" style="left:1452px;width:61px"></div>
</div>
</body></html>
